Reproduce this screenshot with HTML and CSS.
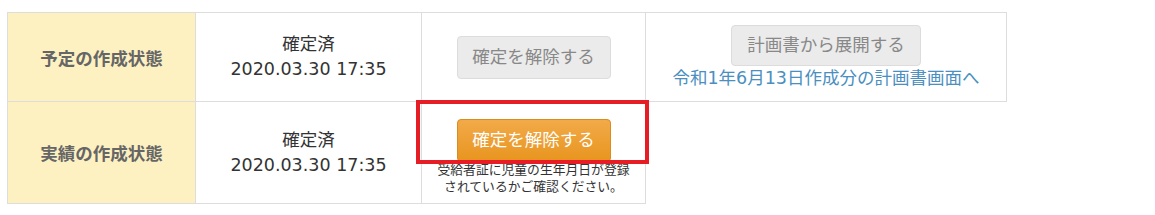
FILE: index.html
```html
<!DOCTYPE html>
<html>
<head>
  <meta charset="utf-8">
  <title>作成状態</title>
  <link rel="stylesheet" href="styles.css">
</head>
<body>
  <table class="status-table">
    <tr class="row-plan">
      <th>予定の作成状態</th>
      <td class="col-date">確定済<br>2020.03.30 17:35</td>
      <td class="col-action">
        <button class="btn btn-disabled" disabled>確定を解除する</button>
      </td>
      <td class="col-extra">
        <button class="btn btn-disabled btn-wide" disabled>計画書から展開する</button>
        <a class="plan-link" href="#">令和1年6月13日作成分の計画書画面へ</a>
      </td>
    </tr>
    <tr class="row-result">
      <th>実績の作成状態</th>
      <td class="col-date">確定済<br>2020.03.30 17:35</td>
      <td class="col-action marked">
        <button class="btn btn-orange">確定を解除する</button>
        <p class="note">受給者証に児童の生年月日が登録<br>されているかご確認ください。</p>
        <span class="highlight"></span>
      </td>
    </tr>
  </table>
</body>
</html>
```

FILE: styles.css
```css
body {
  margin: 0;
  padding: 12px 0 0 7px;
  background: #fff;
  font-family: "DejaVu Sans", "Noto Sans CJK JP", sans-serif;
  color: #333;
}

.status-table {
  border-collapse: collapse;
}
.status-table th,
.status-table td {
  border: 1px solid #ddd;
  padding: 0;
  text-align: center;
  vertical-align: middle;
}
.status-table th {
  width: 187px;
  background: #fdf1c1;
  color: #666;
  font-size: 17.5px;
  font-weight: bold;
}
.row-plan th,
.row-plan td {
  height: 88px;
}
.row-result th,
.row-result td {
  height: 101px;
}
.col-date {
  width: 225px;
  font-size: 17.5px;
  line-height: 25px;
}
.col-action {
  width: 223px;
}
.col-extra {
  width: 360px;
}

.btn {
  display: block;
  margin: 0 auto;
  width: 154px;
  height: 43px;
  border-radius: 4px;
  font-family: inherit;
  font-size: 17.5px;
  line-height: 41px;
  padding: 0;
}
.btn-disabled {
  background: #ebebeb;
  border: 1px solid #dcdcdc;
  color: #888;
}
.btn-wide {
  width: 190px;
  height: 41px;
  line-height: 39px;
}
.btn-orange {
  background: linear-gradient(#f2aa48, #e8951f);
  border: 1px solid #dc8c1e;
  color: #fff;
}
.plan-link {
  display: block;
  color: #4a8fbf;
  font-size: 17.5px;
  line-height: 24px;
  text-decoration: none;
}

.marked {
  position: relative;
  vertical-align: top;
}
.marked .btn {
  margin-top: 9px;
}
.note {
  margin: -1px 0 0;
  font-size: 12.8px;
  line-height: 17px;
  color: #333;
}
.highlight {
  position: absolute;
  left: -6px;
  top: -2px;
  width: 225px;
  height: 56px;
  border: 4px solid #e61d25;
}
```
